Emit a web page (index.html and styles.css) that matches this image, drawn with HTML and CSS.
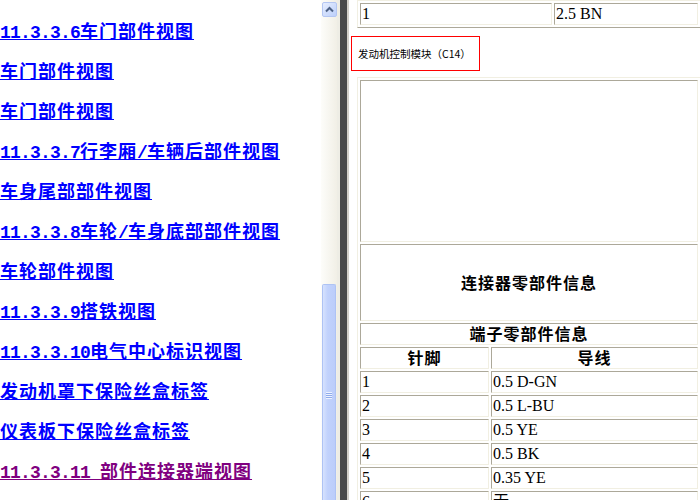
FILE: index.html
```html
<!DOCTYPE html>
<html lang="zh-CN">
<head>
<meta charset="utf-8">
<title>部件连接器端视图</title>
<link rel="stylesheet" href="styles.css">
</head>
<body>
<div class="frames">
  <div class="nav-frame">
    <ul class="nav">
      <li><a href="#">车门部件视图</a></li>
      <li><a href="#"><span class="n">11.3.3.6</span>车门部件视图</a></li>
      <li><a href="#">车门部件视图</a></li>
      <li><a href="#">车门部件视图</a></li>
      <li><a href="#"><span class="n">11.3.3.7</span>行李厢<span class="n">/</span>车辆后部件视图</a></li>
      <li><a href="#">车身尾部部件视图</a></li>
      <li><a href="#"><span class="n">11.3.3.8</span>车轮<span class="n">/</span>车身底部部件视图</a></li>
      <li><a href="#">车轮部件视图</a></li>
      <li><a href="#"><span class="n">11.3.3.9</span>搭铁视图</a></li>
      <li><a href="#"><span class="n">11.3.3.10</span>电气中心标识视图</a></li>
      <li><a href="#">发动机罩下保险丝盒标签</a></li>
      <li><a href="#">仪表板下保险丝盒标签</a></li>
      <li><a href="#" class="visited"><span class="n">11.3.3.11 </span>部件连接器端视图</a></li>
      <li><a href="#">部件连接器端视图</a></li>
    </ul>
    <div class="scrollbar">
      <div class="sb-btn">
        <svg width="15" height="15" viewBox="0 0 15 15"><polyline points="4,9.5 7.5,6 11,9.5" fill="none" stroke="#4d6185" stroke-width="2"/></svg>
      </div>
      <div class="sb-thumb"><span class="grip"></span></div>
    </div>
  </div>
  <div class="splitter"></div>
  <div class="doc-frame">
    <table class="grid">
      <tr><td class="w-wide">1</td><td>2.5 BN</td></tr>
    </table>
    <div class="callout">发动机控制模块（C14）</div>
    <table class="grid">
      <tr><td colspan="2" class="blank"></td></tr>
      <tr><th colspan="2" class="tall">连接器零部件信息</th></tr>
      <tr><th colspan="2">端子零部件信息</th></tr>
      <tr><th class="w-pin">针脚</th><th>导线</th></tr>
      <tr><td>1</td><td>0.5 D-GN</td></tr>
      <tr><td>2</td><td>0.5 L-BU</td></tr>
      <tr><td>3</td><td>0.5 YE</td></tr>
      <tr><td>4</td><td>0.5 BK</td></tr>
      <tr><td>5</td><td>0.35 YE</td></tr>
      <tr><td>6</td><td>无</td></tr>
    </table>
  </div>
</div>
</body>
</html>
```

FILE: styles.css
```css
html, body {
  margin: 0;
  height: 100%;
  overflow: hidden;
  background: #fff;
}

.frames {
  display: flex;
  height: 500px;
  overflow: hidden;
}

/* ---------- left navigation frame ---------- */
.nav-frame {
  width: 337px;
  flex: none;
  display: flex;
  overflow: hidden;
}

.nav {
  flex: 1;
  min-width: 0;
  margin: -30px 0 0;
  padding: 0;
  list-style: none;
  overflow: hidden;
}

.nav li {
  height: 40px;
  line-height: 40px;
  white-space: nowrap;
}

.nav a {
  color: #0000ff;
  font: bold 18px/40px "Noto Sans CJK SC", sans-serif;
  letter-spacing: 1px;
  text-decoration: underline;
}

.nav a.visited {
  color: #800080;
}

.nav .n {
  font-family: "Liberation Mono", monospace;
  font-size: 18px;
  letter-spacing: -0.8px;
  white-space: pre;
}

.scrollbar {
  width: 16px;
  flex: none;
  display: flex;
  flex-direction: column;
  background: linear-gradient(to right, #fdfdfa, #f1efe6);
}

.sb-btn {
  width: 15px;
  height: 15px;
  margin: 2px 0 0 1px;
  box-sizing: border-box;
  border: 1px solid #b4c6f2;
  border-radius: 2px;
  background: linear-gradient(135deg, #e6eeff, #bccffa);
  display: flex;
}

.sb-btn svg {
  margin: -1px;
}

.sb-thumb {
  width: 14px;
  flex: 1;
  margin: 267px 0 0 1px;
  box-sizing: border-box;
  border: 1px solid #aec3f4;
  border-bottom: none;
  border-radius: 2px 2px 0 0;
  background: linear-gradient(to right, #d6e2fe, #c1d2fc 40%, #bccdfa);
  display: flex;
  justify-content: center;
}

.grip {
  width: 6px;
  height: 7px;
  margin-top: 107px;
  background: repeating-linear-gradient(to bottom, #eef3ff 0 1px, #8fabeb 1px 2px);
}

/* ---------- frame splitter ---------- */
.splitter {
  width: 12px;
  flex: none;
  box-sizing: border-box;
  border-left: 3px solid #eeede5;
  border-right: 2px solid #d4d0c8;
  background: #4a4a4a;
}

/* ---------- right document frame ---------- */
.doc-frame {
  flex: 1;
  min-width: 0;
  overflow: hidden;
  padding-left: 2px;
}

.grid {
  width: 344px;
  margin-left: 6px;
  border-collapse: separate;
  border-spacing: 2px;
  border: 1px solid;
  border-color: #f1efe2 #aca899 #aca899 #f1efe2;
  font: 16px/20px "Liberation Serif", "Noto Sans CJK SC", serif;
  color: #000;
}

.grid td,
.grid th {
  border: 1px solid;
  border-color: #aca899 #f1efe2 #f1efe2 #aca899;
  height: 20px;
  padding: 0 0 0 1px;
  text-align: left;
  vertical-align: middle;
}

.grid th {
  height: 18px;
  padding: 0 0 2px;
  text-align: center;
  font: bold 16px/18px "Noto Sans CJK SC", sans-serif;
  letter-spacing: 1px;
}

.grid .w-wide {
  width: 189px;
}

.grid .w-pin {
  width: 127px;
}

.grid .blank {
  height: 160px;
  padding: 0;
}

.grid .tall {
  height: 73px;
}

.callout {
  width: 129px;
  height: 35px;
  box-sizing: border-box;
  margin: 8px 0 6px;
  padding-left: 6px;
  border: 1px solid #ff0000;
  display: flex;
  align-items: center;
  font: 10.5px "Noto Sans CJK SC", sans-serif;
  color: #000;
  white-space: nowrap;
}
```
